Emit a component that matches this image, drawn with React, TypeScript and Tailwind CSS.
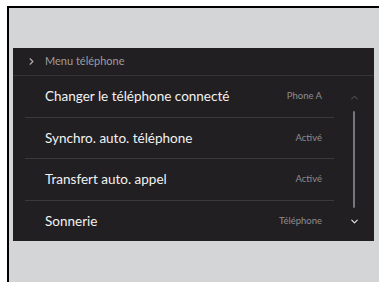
import { ChevronRight, ChevronUp, ChevronDown } from "lucide-react";

const lignes = [
  { titre: "Changer le téléphone connecté", valeur: "Phone A" },
  { titre: "Synchro. auto. téléphone", valeur: "Activé" },
  { titre: "Transfert auto. appel", valeur: "Activé" },
  { titre: "Sonnerie", valeur: "Téléphone" },
];

export default function App() {
  return (
    <div
      className="w-[379px] h-[282px] bg-white pl-[7px] pt-[6px] overflow-hidden"
      style={{ fontFamily: "Lato, 'Open Sans', sans-serif" }}
    >
      <div className="h-full border-l-2 border-t-2 border-black bg-[#d4d5d7] pl-[4px] pt-[40px]">
        <div className="w-[361px] h-[193px] bg-[#211f22] flex flex-col">
          {/* en-tête */}
          <div className="h-[28px] flex items-center border-b border-[#353437] shrink-0">
            <ChevronRight className="ml-[13px] text-[#b0b0b0]" size={11} strokeWidth={2.5} />
            <span className="ml-[8px] text-[11px] text-[#9d9d9f]">Menu téléphone</span>
          </div>

          <div className="flex flex-1">
            <div className="flex-1 flex flex-col pl-[12px]">
              {lignes.map((ligne, i) => (
                <div
                  key={ligne.titre}
                  className={
                    "flex-1 flex items-center justify-between pr-[12px] " +
                    (i < lignes.length - 1 ? "border-b border-[#3a393c]" : "")
                  }
                >
                  <span className="pl-[20px] text-[13.5px] text-[#f2f2f2]">{ligne.titre}</span>
                  <span className="text-[9.5px] text-[#8e8e90]">{ligne.valeur}</span>
                </div>
              ))}
            </div>

            {/* barre de défilement */}
            <div className="w-[40px] flex flex-col items-center pt-[16px] pb-[14px]">
              <ChevronUp className="text-[#4a494c]" size={11} strokeWidth={2.5} />
              <div className="w-[2px] flex-1 bg-[#77767a] mt-[8px] mb-[8px] rounded-full" />
              <ChevronDown className="text-[#e6e6e6]" size={11} strokeWidth={2.5} />
            </div>
          </div>
        </div>
      </div>
    </div>
  );
}
